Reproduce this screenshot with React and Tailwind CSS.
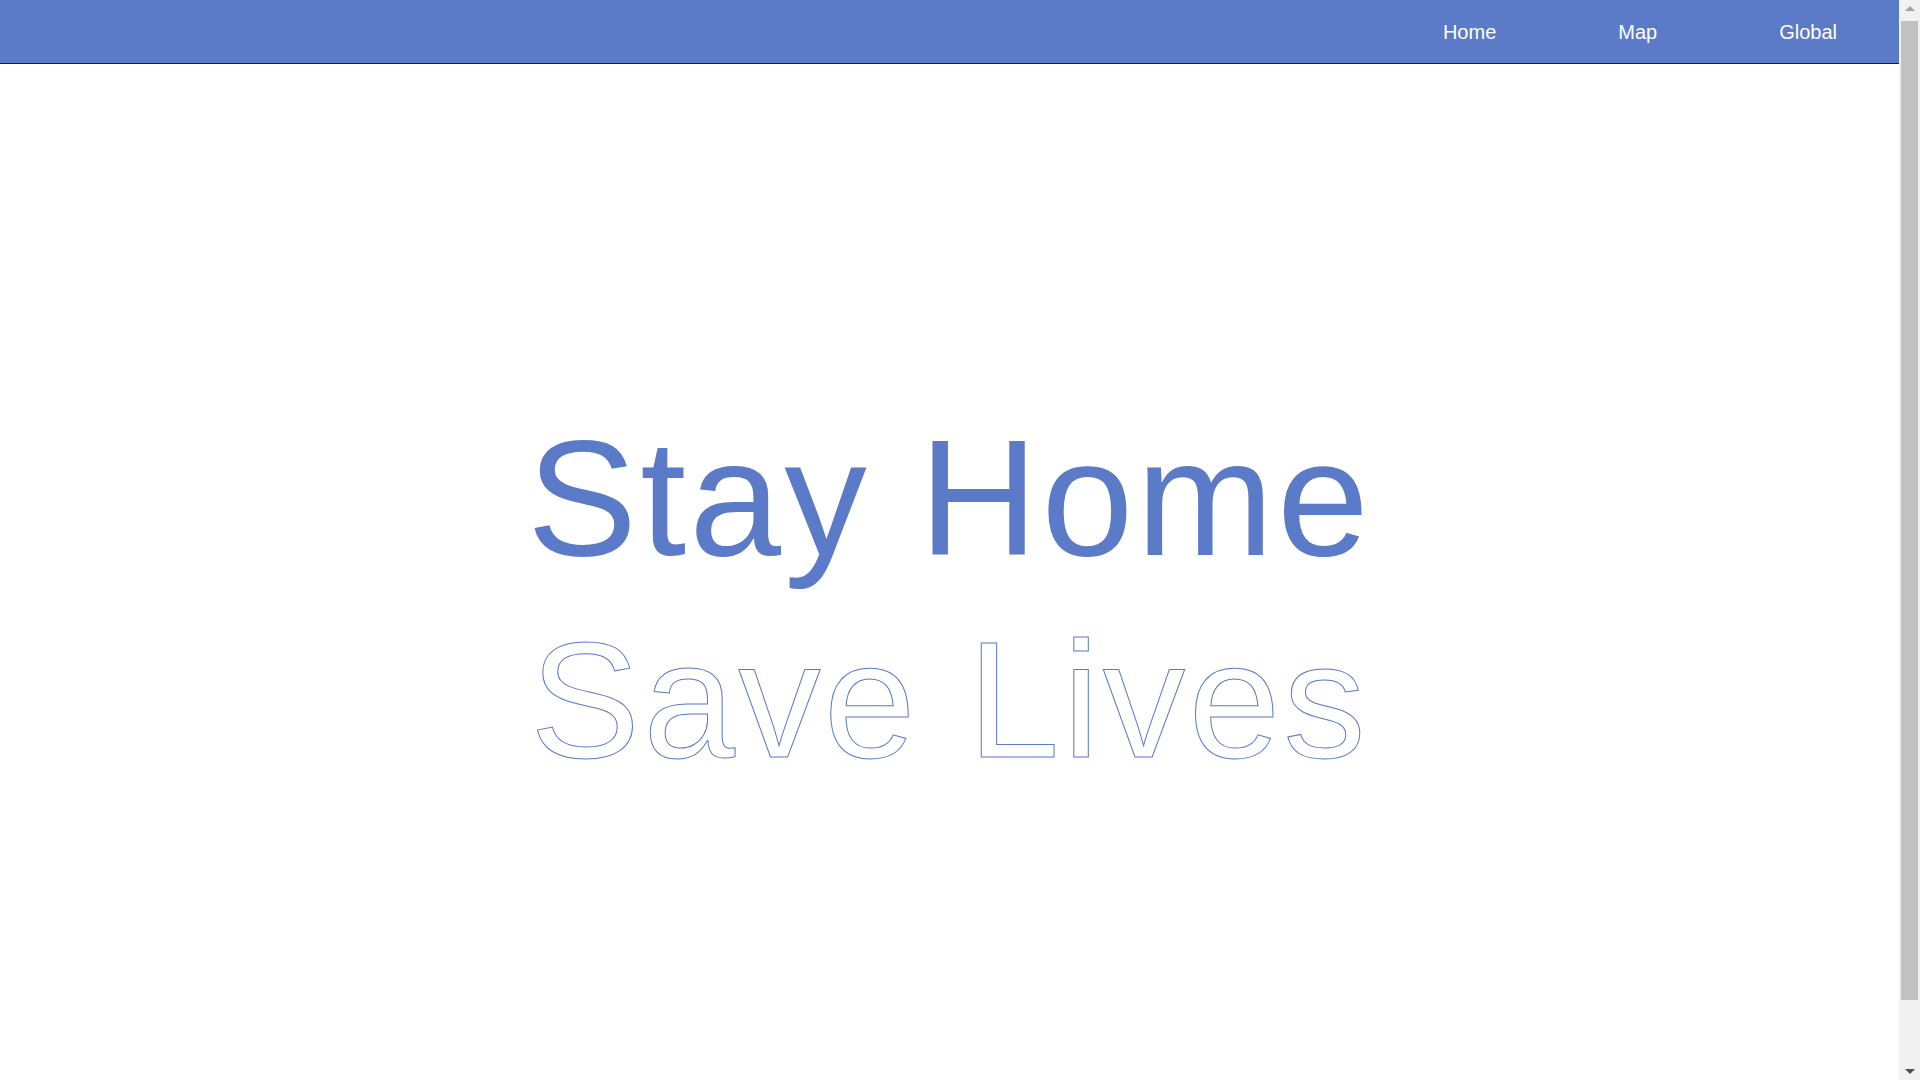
const links = ["Home", "Map", "Global"]

function Scrollbar() {
  return (
    <aside className="sticky top-0 w-[21px] h-screen shrink-0 bg-[#f1f1f1] flex flex-col items-center">
      <div className="h-[21px] w-full flex items-center justify-center">
        <div className="w-0 h-0 border-x-[5px] border-x-transparent border-b-[5px] border-b-[#a3a3a3] -mt-[4px]" />
      </div>
      <div className="h-[979px] w-[17px] bg-[#c1c1c1]" />
      <div className="flex-1" />
      <div className="h-[17px] w-full flex items-center justify-center">
        <div className="w-0 h-0 border-x-[5px] border-x-transparent border-t-[5px] border-t-[#505050]" />
      </div>
    </aside>
  )
}

export default function App() {
  return (
    <div className="flex bg-white font-['Liberation_Sans',Arial,sans-serif]">
      <div className="flex-1 min-w-0">
        <nav className="h-16 bg-[#5b7ac7] border-b border-[#0000ff] flex items-center justify-end pr-px">
          {links.map((l) => (
            <a key={l} href="#" className="px-[61px] text-[20px] text-white leading-none">
              {l}
            </a>
          ))}
        </nav>

        <main className="h-screen flex flex-col items-center justify-center pb-[10px] text-[165px] leading-[202px] tracking-[3.2px]">
          <h1 className="text-[#5b7ac7]">Stay Home</h1>
          <h2 className="text-transparent [-webkit-text-stroke:1px_#5b7ac7]">Save Lives</h2>
        </main>
      </div>
      <Scrollbar />
    </div>
  )
}
